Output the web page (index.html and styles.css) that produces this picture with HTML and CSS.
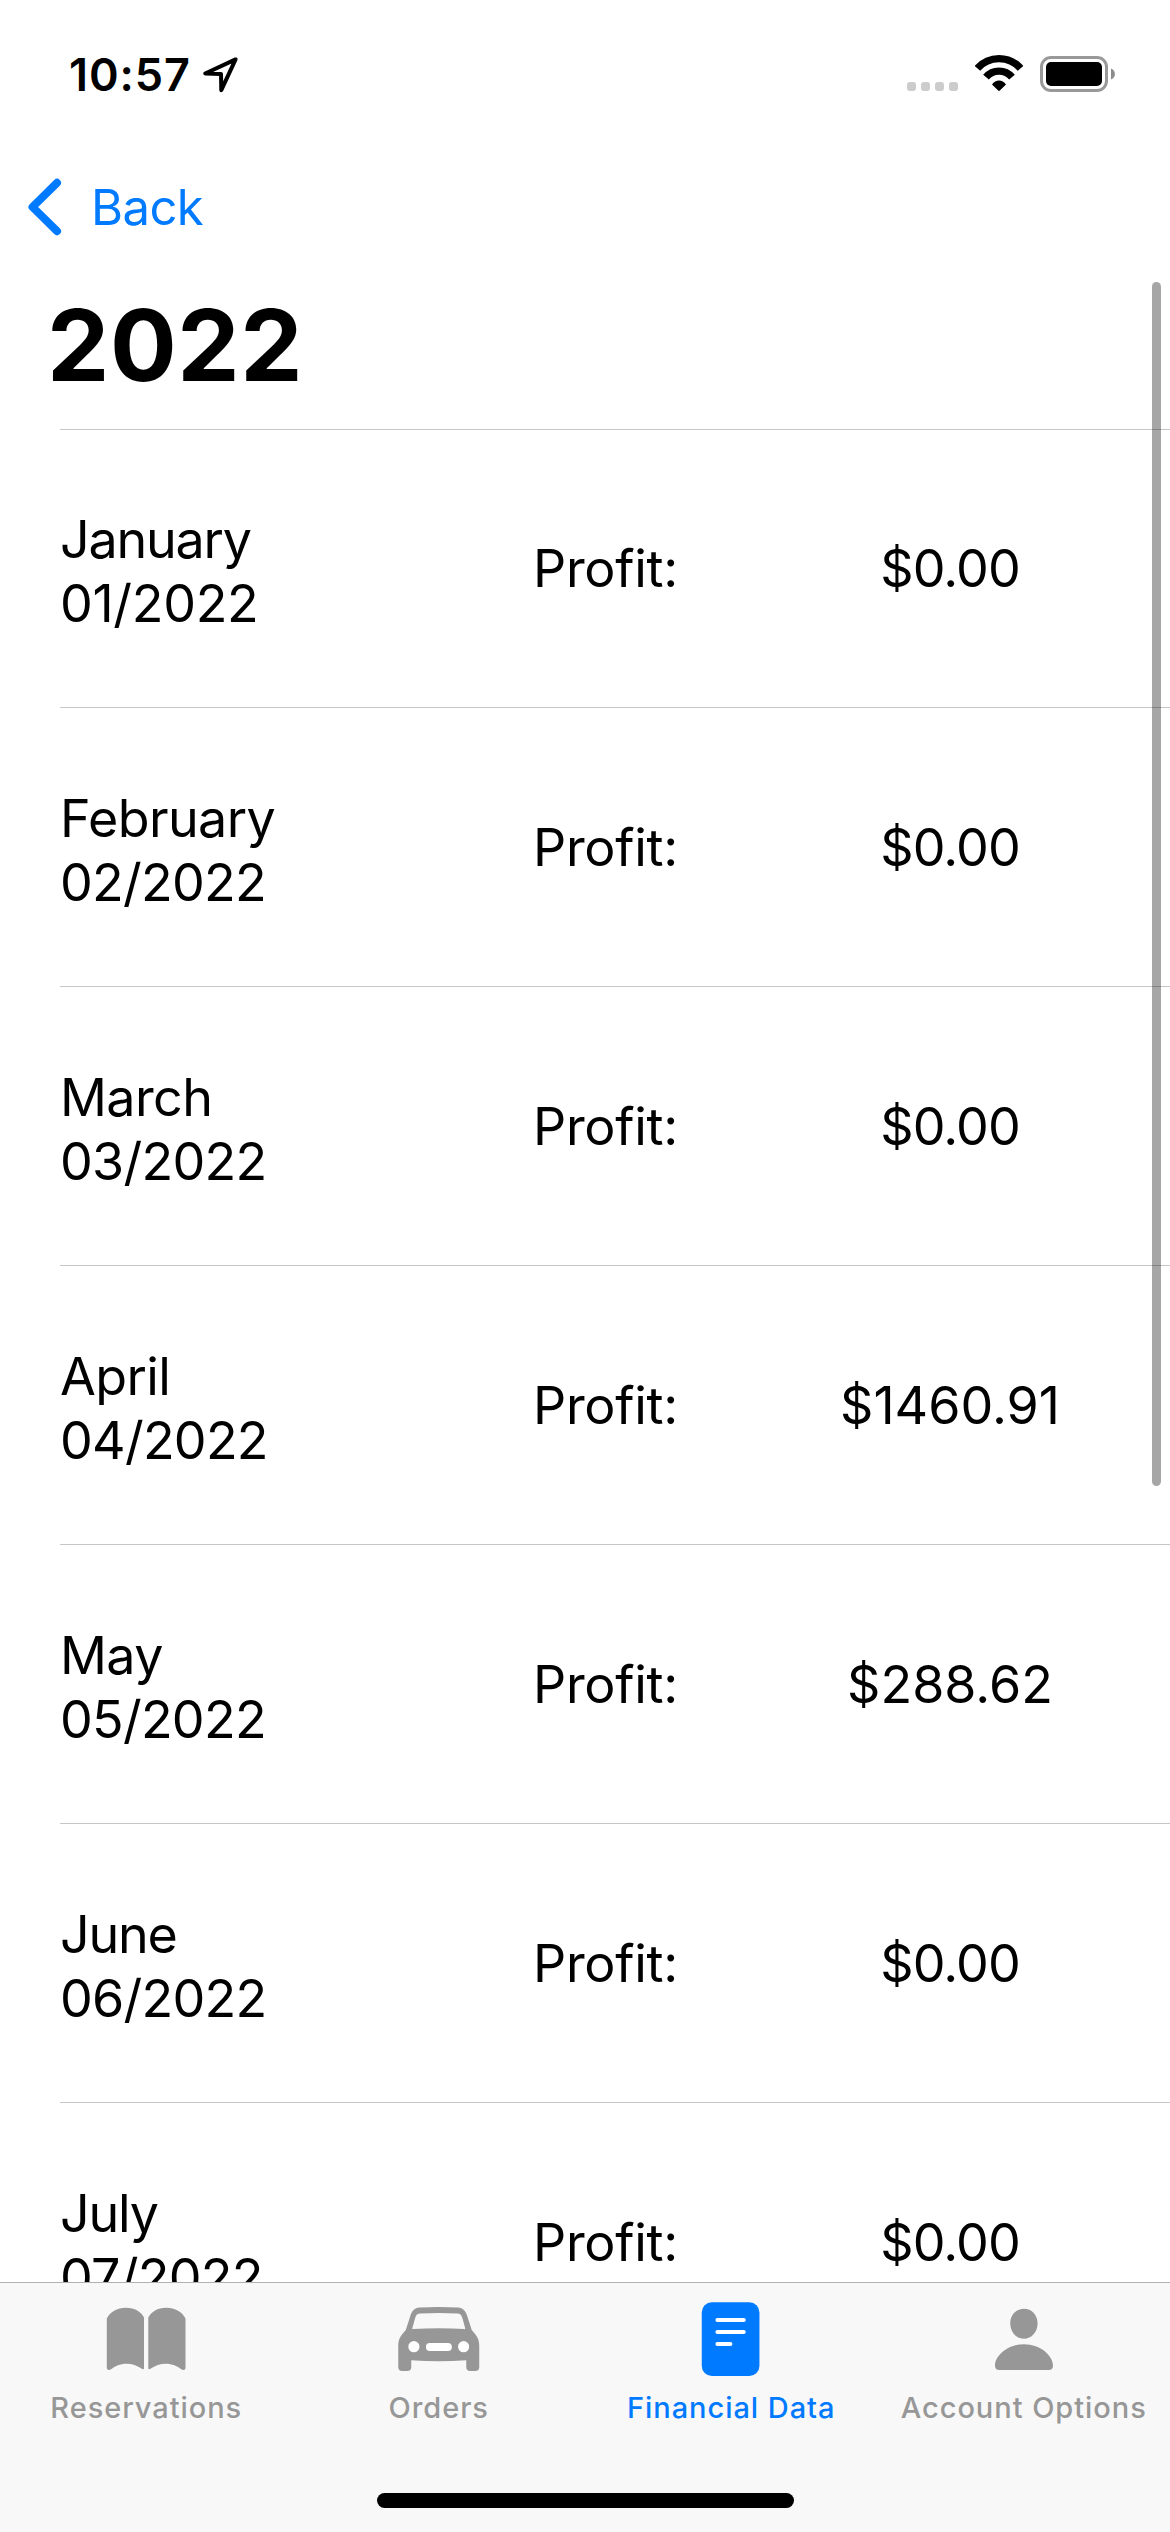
FILE: index.html
```html
<!DOCTYPE html>
<html lang="en">
<head>
<meta charset="utf-8">
<title>Financial Data – 2022</title>
<link rel="stylesheet" href="styles.css">
</head>
<body>
<div class="screen">
  <header class="status-bar">
    <div class="status-left">
      <span class="time">10:57</span>
      <svg class="location" width="38" height="40" viewBox="0 0 38 40"><path d="M34.600 4.400 4.200 18.500 20 19.100 20.300 35.200Z" fill="none" stroke="#000" stroke-width="4" stroke-linejoin="round"/></svg>
    </div>
    <div class="status-right">
      <svg width="51" height="50" viewBox="0 0 51 50" fill="#ccc"><rect y="32" width="9" height="9" rx="3"/><rect x="14" y="32" width="9" height="9" rx="3"/><rect x="28" y="32" width="9" height="9" rx="3"/><rect x="42" y="32" width="9" height="9" rx="3"/></svg>
      <svg width="48" height="50" viewBox="0 0 48 50"><g fill="none" stroke="#000" stroke-width="7.4"><path d="M2.4 18.4A28.7 28.7 0 0 1 45.6 18.4"/><path d="M11 27.2A17 17 0 0 1 37 27.2"/></g><path d="M17 34.4C20.5 29.2 27.5 29.2 31 34.4L24.8 40.6Q24 41.4 23.2 40.6Z"/></svg>
      <svg width="76" height="50" viewBox="0 0 76 50"><rect x="1.5" y="7.5" width="65" height="33" rx="9.5" fill="none" stroke="#999" stroke-width="3"/><rect x="6" y="12" width="56" height="24" rx="5"/><path d="M71 18.5C76.2 20.5 76.2 27.5 71 29.5Z" fill="#8c8c8c"/></svg>
    </div>
  </header>

  <nav class="nav-bar">
    <a class="back">
      <svg width="36" height="60" viewBox="0 0 36 60"><path d="M31 5.8 6.5 30 31 54.2" fill="none" stroke="#007aff" stroke-width="8" stroke-linecap="round" stroke-linejoin="round"/></svg>
      <span>Back</span>
    </a>
  </nav>

  <h1 class="title">2022</h1>

  <main class="content">
    <ul class="months">
      <li class="month"><div class="period"><span class="name name-tight">January</span><span class="date date-wide">01/2022</span></div><span class="label">Profit:</span><span class="amount amount-zero">$0.00</span></li>
      <li class="month"><div class="period"><span class="name">February</span><span class="date">02/2022</span></div><span class="label">Profit:</span><span class="amount amount-zero">$0.00</span></li>
      <li class="month"><div class="period"><span class="name">March</span><span class="date">03/2022</span></div><span class="label">Profit:</span><span class="amount amount-zero">$0.00</span></li>
      <li class="month"><div class="period"><span class="name">April</span><span class="date">04/2022</span></div><span class="label">Profit:</span><span class="amount">$1460.91</span></li>
      <li class="month"><div class="period"><span class="name">May</span><span class="date">05/2022</span></div><span class="label">Profit:</span><span class="amount">$288.62</span></li>
      <li class="month"><div class="period"><span class="name name-tight">June</span><span class="date">06/2022</span></div><span class="label">Profit:</span><span class="amount amount-zero">$0.00</span></li>
      <li class="month"><div class="period"><span class="name name-tight">July</span><span class="date">07/2022</span></div><span class="label">Profit:</span><span class="amount amount-zero">$0.00</span></li>
    </ul>
  </main>

  <footer class="tab-bar">
    <div class="tabs">
      <a class="tab">
        <svg class="tab-icon" viewBox="0 0 96 78"><path d="M8.8 18.5C12 12 19 7.8 28 7.8S43 12 46 17.5V68Q46 69.8 44.3 69C39 65.3 34 63.7 28.5 63.7 22 63.7 17 66 13 69.3 11 70.5 8.8 69.8 8.8 68ZM87.5 18.5C84.300 12 77.300 7.8 68.300 7.8S53.300 12 50.300 17.5V68Q50.300 69.8 52 69C57.300 65.3 62.300 63.7 67.800 63.7 74.300 63.7 79.300 66 83.300 69.3 85.300 70.5 87.500 69.8 87.500 68Z"/></svg>
        <span>Reservations</span>
      </a>
      <a class="tab">
        <svg class="tab-icon" viewBox="0 0 96 78"><path fill-rule="evenodd" d="M14.800 30 19.300 16C21 10.500 23.500 8 28.500 7.500 41 6.800 54.500 6.800 67 7.500 72 8 74.500 10.500 76.200 16L80.700 30C85.500 35.500 88.250 38.500 88.250 46V67Q88.250 71 84.250 71H79.250Q75.250 71 75.250 67V60.300C57 61.600 38.500 61.600 20.250 60.300V67Q20.250 71 16.250 71H11.250Q7.250 71 7.250 67V46C7.250 38.500 10 35.500 14.800 30ZM21.300 28.200Q21 29.300 22.300 29.100C39 27.800 56.500 27.800 73.200 29.100Q74.500 29.300 74.200 28.200L71.500 18.500C70.500 15.200 69.500 13.800 66.800 13.600 54 12.900 41.500 12.900 28.700 13.600 26 13.800 25 15.200 24 18.500Z"/><g fill="#fff"><circle cx="22.900" cy="46.700" r="5.600"/><circle cx="72.600" cy="46.700" r="5.600"/><rect x="34.900" y="43" width="26" height="8" rx="4"/></g></svg>
        <span>Orders</span>
      </a>
      <a class="tab tab-active">
        <svg class="tab-icon" viewBox="0 0 96 78"><rect x="18.750" y="2.300" width="57.700" height="73.700" rx="10"/><path d="M34.400 20H60.750M34.400 32H60.750M34.400 44H47.400" stroke="#fff" stroke-width="4" stroke-linecap="round"/></svg>
        <span>Financial Data</span>
      </a>
      <a class="tab">
        <svg class="tab-icon" viewBox="0 0 96 78"><path d="M47.900 8.700C55.500 8.700 61.600 14.800 61.600 23.200 61.600 32 55.500 38.700 47.900 38.700S34.250 32 34.250 23.200C34.250 14.800 40.300 8.700 47.900 8.700ZM47.900 44.200C65 44.200 77 56 77 65.500Q77 70 72.500 70H23.500Q19 70 19 65.500C19 56 31 44.200 47.900 44.200Z"/></svg>
        <span>Account Options</span>
      </a>
    </div>
    <div class="home-indicator"></div>
  </footer>

  <div class="scroll-thumb"></div>
</div>
</body>
</html>
```
FILE: styles.css
```css
* {
  box-sizing: border-box;
}

body {
  margin: 0;
  background: #fff;
  color: #000;
  font-family: "Inter", "Liberation Sans", sans-serif;
}

svg {
  display: block;
  flex: none;
}

.screen {
  position: relative;
  display: flex;
  flex-direction: column;
  width: 1170px;
  height: 2532px;
  overflow: hidden;
}

.status-bar {
  display: flex;
  justify-content: space-between;
  height: 141px;
  padding: 50px 54px 0 69px;
}

.status-left {
  display: flex;
}

.time {
  width: 132px;
  font-size: 45px;
  font-weight: 600;
  line-height: 50px;
  letter-spacing: 0.9px;
}

.location {
  margin-top: 5px;
}

.status-right {
  display: flex;
}

.status-right svg + svg {
  margin-left: 17px;
}

.nav-bar {
  display: flex;
  align-items: center;
  height: 132px;
  padding-left: 26px;
}

.back {
  display: flex;
  align-items: center;
  gap: 29px;
  color: #007aff;
  font-size: 49px;
  line-height: 59px;
  letter-spacing: -0.6px;
}

.title {
  height: 156px;
  margin: 0;
  padding: 12px 0 0 47px;
  font-size: 99px;
  font-weight: 700;
  line-height: 120px;
  letter-spacing: 0.6px;
}

.content {
  flex: 1;
  min-height: 0;
  overflow: hidden;
}

.months {
  margin: 0 0 0 60px;
  padding: 0;
  list-style: none;
  border-top: 1px solid #c6c6c8;
}

.month {
  display: grid;
  grid-template-columns: 473px 197px 1fr;
  align-items: center;
  height: 279px;
  border-bottom: 1px solid #c6c6c8;
  font-size: 52px;
  line-height: 64px;
}

.month:first-child {
  margin-top: -1px;
}

.period {
  display: flex;
  flex-direction: column;
  padding-top: 7px;
}

.name {
  letter-spacing: -0.6px;
}

.name-tight {
  letter-spacing: -1.2px;
}

.date {
  letter-spacing: -0.75px;
}

.date-wide,
.label {
  letter-spacing: -0.3px;
}

.label,
.amount {
  padding-top: 2px;
}

.amount {
  text-align: center;
}

.amount-zero {
  letter-spacing: -0.9px;
}

.tab-bar {
  display: flex;
  flex-direction: column;
  justify-content: space-between;
  align-items: center;
  height: 250px;
  padding: 17px 0 24px;
  border-top: 1px solid #b2b2b2;
  background: #f8f8f8;
}

.tabs {
  display: grid;
  grid-template-columns: repeat(4, 1fr);
  width: 100%;
}

.tab {
  display: flex;
  flex-direction: column;
  align-items: center;
  gap: 12px;
  color: #979797;
  font-size: 29px;
  font-weight: 500;
  line-height: 36px;
  letter-spacing: 0.95px;
  white-space: nowrap;
}

.tab-active {
  color: #007aff;
}

.tab-icon {
  width: 96px;
  height: 78px;
  fill: currentColor;
}

.home-indicator {
  width: 417px;
  height: 15px;
  border-radius: 8px;
  background: #000;
}

.scroll-thumb {
  position: absolute;
  top: 282px;
  right: 9px;
  width: 9px;
  height: 1204px;
  border-radius: 5px;
  background: rgba(0, 0, 0, 0.35);
}
```
